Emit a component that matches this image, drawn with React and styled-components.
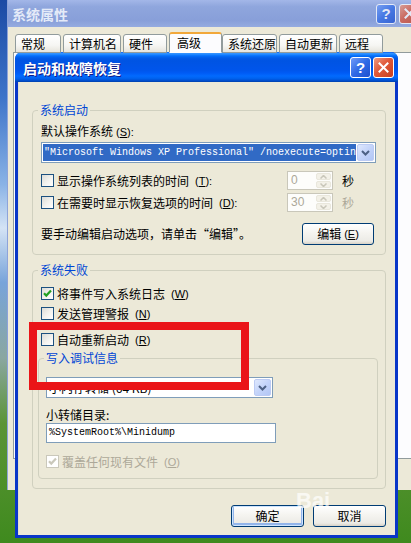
import React from 'react';
import styled, { createGlobalStyle } from 'styled-components';

const GlobalStyle = createGlobalStyle`
  html, body {
    margin: 0;
    padding: 0;
  }
  body {
    font-family: "Noto Sans CJK SC", "Liberation Sans", sans-serif;
    font-size: 12px;
    line-height: 14px;
    color: #000;
  }
`;

const Desktop = styled.div`
  position: relative;
  width: 411px;
  height: 543px;
  overflow: hidden;
  background: linear-gradient(
    to bottom,
    #1c4aa4 0%,
    #3d74c9 18%,
    #8ab3e6 34%,
    #d4e3f5 42%,
    #78a4da 52%,
    #8aa7a0 66%,
    #5b9436 78%,
    #3f8a1e 100%
  );
`;

/* ---------- back window: 系统属性 ---------- */

const BackWindow = styled.div`
  position: absolute;
  left: 7px;
  top: 0;
  width: 430px;
  height: 490px;
  display: flex;
  flex-direction: column;
  background: #ece9d8;
  border-left: 1px solid #8ea3d9;
`;

const BackTitleBar = styled.div`
  height: 27px;
  flex-shrink: 0;
  display: flex;
  align-items: center;
  gap: 3px;
  padding: 0 19px 0 4px;
  background: linear-gradient(to bottom, #a3b7e8 0%, #8fa6dd 25%, #889fd9 75%, #95abe0 100%);
  color: #e4eaf8;
  font-size: 14px;
  font-weight: bold;
`;

const TitleText = styled.span`
  flex: 1;
  white-space: nowrap;
  text-shadow: ${(p) => (p.$active ? '1px 1px 0 #0f1b89' : 'none')};
`;

const TitleButton = styled.div`
  width: ${(p) => p.$size}px;
  height: ${(p) => p.$size}px;
  box-sizing: border-box;
  flex-shrink: 0;
  display: flex;
  align-items: center;
  justify-content: center;
  border: 1px solid #fff;
  border-radius: 3px;
  color: #fff;
  font-family: "Liberation Sans", sans-serif;
  font-size: 15px;
  font-weight: bold;
  opacity: ${(p) => (p.$inactive ? 0.75 : 1)};
  background: ${(p) =>
    p.$kind === 'close'
      ? 'linear-gradient(135deg, #ee9a80 0%, #e0593a 45%, #c8401f 100%)'
      : 'linear-gradient(135deg, #6f9cf8 0%, #2f6ae6 50%, #1d4fcf 100%)'};
`;

const TabStrip = styled.div`
  height: 25px;
  flex-shrink: 0;
  display: flex;
  align-items: flex-end;
  padding-left: 7px;
`;

const Tab = styled.div`
  position: relative;
  z-index: ${(p) => (p.$active ? 2 : 1)};
  width: ${(p) => p.$w}px;
  height: ${(p) => (p.$active ? 21 : 19)}px;
  margin-right: ${(p) => (p.$active ? 0 : 2)}px;
  margin-bottom: -1px;
  box-sizing: border-box;
  flex-shrink: 0;
  display: flex;
  align-items: center;
  padding-left: ${(p) => (p.$active ? 7 : 5)}px;
  border: 1px solid #919b9c;
  border-bottom: ${(p) => (p.$active ? '1px solid #fcfcfe' : '1px solid #919b9c')};
  border-top: ${(p) => (p.$active ? '2px solid #f2a83a' : '1px solid #919b9c')};
  border-radius: 3px 3px 0 0;
  background: ${(p) =>
    p.$active ? '#fcfcfe' : 'linear-gradient(to bottom, #ffffff 0%, #f6f6f3 60%, #e6e4dc 100%)'};
  font-size: 12px;
  white-space: nowrap;
`;

const TabPanel = styled.div`
  height: 407px;
  margin-left: 5px;
  box-sizing: border-box;
  border: 1px solid #919b9c;
  background: #fcfcfe;
`;

/* ---------- front dialog: 启动和故障恢复 ---------- */

const Dialog = styled.div`
  position: absolute;
  left: 15px;
  top: 52px;
  width: 383px;
  height: 486px;
  box-sizing: border-box;
  display: flex;
  flex-direction: column;
  background: #0936c8;
  border-radius: 7px 7px 0 0;
  overflow: hidden;
`;

const TitleBar = styled.div`
  height: 30px;
  flex-shrink: 0;
  display: flex;
  align-items: center;
  gap: 2px;
  padding: 1px 4px 0 8px;
  box-sizing: border-box;
  color: #fff;
  font-size: 14px;
  font-weight: bold;
  background: linear-gradient(
    to bottom,
    #0058ee 0%,
    #3593ff 4%,
    #288eff 7%,
    #127dff 10%,
    #036ffc 13%,
    #0262ee 17%,
    #0057e5 23%,
    #0054e3 30%,
    #0055eb 60%,
    #005bf5 70%,
    #026afe 80%,
    #0062ef 88%,
    #0052d6 94%,
    #0040ab 100%
  );
`;

const Body = styled.div`
  flex: 1;
  margin: 0 3px 3px;
  padding: 21px 9px 0 13px;
  display: flex;
  flex-direction: column;
  background: #ece9d8;
  border-left: 1px solid #e3e0cc;
`;

const Group = styled.fieldset`
  margin: ${(p) => p.$mt || 0}px 0 0;
  padding: ${(p) => p.$pad};
  border: 1px solid #d0d0bf;
  border-radius: 4px;
  min-width: 0;
`;

const Legend = styled.legend`
  color: #0046d5;
  padding: 0 2px;
  margin-left: ${(p) => p.$ml || 0}px;
  line-height: 14px;
  font-size: 12px;
`;

const Key = styled.span`
  margin-left: 3px;
  font-family: "Liberation Sans", sans-serif;
  font-size: 11px;

  u {
    text-underline-offset: 1px;
  }
`;

const Label = styled.div`
  height: 14px;
  margin-top: ${(p) => p.$mt || 0}px;
  color: ${(p) => (p.$disabled ? '#aca899' : '#000')};
  white-space: nowrap;
`;

const Combo = styled.div`
  width: ${(p) => p.$w}px;
  height: 21px;
  margin-top: ${(p) => p.$mt || 0}px;
  box-sizing: border-box;
  flex-shrink: 0;
  display: flex;
  padding: 1px;
  gap: 1px;
  border: 1px solid #7f9db9;
  background: #fff;
`;

const ComboText = styled.div`
  flex: 1;
  min-width: 0;
  overflow: hidden;
  white-space: nowrap;
  padding-left: 1px;
  line-height: 17px;
  font-family: ${(p) => (p.$mono ? '"Liberation Mono", monospace' : 'inherit')};
  font-size: ${(p) => (p.$mono ? 10 : 12)}px;
  background: ${(p) => (p.$selected ? '#316ac5' : 'transparent')};
  color: ${(p) => (p.$selected ? '#fff' : '#000')};
`;

const DropButton = styled.div`
  width: 17px;
  flex-shrink: 0;
  box-sizing: border-box;
  display: flex;
  align-items: center;
  justify-content: center;
  border: 1px solid #bccbf4;
  border-radius: 2px;
  background: linear-gradient(135deg, #dfe8fd 0%, #c4d4fa 50%, #b2c6f5 100%);
`;

const TimeRow = styled.div`
  display: grid;
  grid-template-columns: 1fr 46px 35px;
  column-gap: 9px;
  align-items: center;
  height: 19px;
  margin-top: ${(p) => p.$mt || 0}px;
`;

const CheckRow = styled.label`
  display: flex;
  align-items: center;
  gap: 3px;
  height: 15px;
  margin-top: ${(p) => p.$mt || 0}px;
  padding-left: ${(p) => p.$pl || 0}px;
  color: ${(p) => (p.$disabled ? '#aca899' : '#000')};
  white-space: nowrap;
`;

const CheckBox = styled.span`
  width: 13px;
  height: 13px;
  box-sizing: border-box;
  flex-shrink: 0;
  display: flex;
  align-items: center;
  justify-content: center;
  border: 1px solid ${(p) => (p.$disabled ? '#cac8bb' : '#1c5180')};
  background: ${(p) =>
    p.$disabled ? '#fff' : 'linear-gradient(135deg, #dcdcd7 0%, #f3f3ef 55%, #ffffff 100%)'};
`;

const SpinBox = styled.div`
  width: 46px;
  height: 19px;
  box-sizing: border-box;
  display: flex;
  padding: 1px;
  border: 1px solid #c9c7ba;
  background: #fdfdfb;
`;

const SpinValue = styled.span`
  flex: 1;
  padding-left: 2px;
  line-height: 15px;
  color: #aca899;
  font-family: "Liberation Sans", sans-serif;
  font-size: 12px;
`;

const SpinButtons = styled.div`
  width: 15px;
  display: flex;
  flex-direction: column;
  gap: 1px;
`;

const SpinArrow = styled.div`
  flex: 1;
  display: flex;
  align-items: center;
  justify-content: center;
  border-radius: 2px;
  background: #f3f1e8;
  border: 1px solid #e9e7dc;
`;

const Unit = styled.span`
  color: ${(p) => (p.$disabled ? '#aca899' : '#000')};
`;

const EditRow = styled.div`
  display: flex;
  align-items: center;
  justify-content: space-between;
  margin-top: 11px;
  padding-right: 3px;
`;

const Button = styled.div`
  width: ${(p) => p.$w || 73}px;
  height: 22px;
  box-sizing: border-box;
  display: flex;
  align-items: center;
  justify-content: center;
  border: 1px solid #003c74;
  border-radius: 3px;
  background: linear-gradient(to bottom, #ffffff 0%, #f5f4f0 45%, #ecebe6 85%, #d8d2c6 100%);
  box-shadow: ${(p) => (p.$default ? 'inset 0 0 0 1px #cde4fe, inset 0 -1px 0 2px #93b5ea' : 'none')};
  font-size: 12px;
  white-space: nowrap;
`;

const TextBox = styled.div`
  width: 230px;
  height: 20px;
  margin-top: 1px;
  box-sizing: border-box;
  padding-left: 2px;
  border: 1px solid #7f9db9;
  background: #fff;
  line-height: 18px;
  font-family: "Liberation Mono", monospace;
  font-size: 10px;
`;

const ButtonRow = styled.div`
  display: flex;
  justify-content: flex-end;
  gap: 9px;
  margin-top: 16px;
`;

/* ---------- overlays ---------- */

const Highlight = styled.div`
  position: absolute;
  left: 29px;
  top: 322px;
  width: 220px;
  height: 68px;
  box-sizing: border-box;
  border: 8px solid #ea1418;
`;

const Watermark = styled.div`
  position: absolute;
  left: 296px;
  top: 494px;
  color: rgba(255, 255, 255, 0.7);
  font-family: "Liberation Sans", sans-serif;
  font-weight: bold;
  font-size: 22px;
  pointer-events: none;
`;

const CloseGlyph = () => (
  <svg width="11" height="11" viewBox="0 0 11 11">
    <path d="M1.5 1.5 L9.5 9.5 M9.5 1.5 L1.5 9.5" stroke="#fff" strokeWidth="2" strokeLinecap="square" />
  </svg>
);

const Chevron = () => (
  <svg width="9" height="6" viewBox="0 0 9 6">
    <path d="M1 1 L4.5 4.5 L8 1" fill="none" stroke="#4d6185" strokeWidth="2" />
  </svg>
);

const Check = ({ checked, disabled }) => (
  <CheckBox $disabled={disabled}>
    {checked && (
      <svg width="11" height="11" viewBox="0 0 11 11">
        <path
          d="M2 5.2 L4.3 7.6 L9 2.6"
          fill="none"
          stroke={disabled ? '#cac8bb' : '#21a121'}
          strokeWidth="2.2"
        />
      </svg>
    )}
  </CheckBox>
);

const Spin = ({ value }) => (
  <SpinBox>
    <SpinValue>{value}</SpinValue>
    <SpinButtons>
      <SpinArrow>
        <svg width="7" height="4" viewBox="0 0 7 4">
          <path d="M0.5 3.5 L3.5 0.5 L6.5 3.5" fill="none" stroke="#c9c7ba" strokeWidth="1.5" />
        </svg>
      </SpinArrow>
      <SpinArrow>
        <svg width="7" height="4" viewBox="0 0 7 4">
          <path d="M0.5 0.5 L3.5 3.5 L6.5 0.5" fill="none" stroke="#c9c7ba" strokeWidth="1.5" />
        </svg>
      </SpinArrow>
    </SpinButtons>
  </SpinBox>
);

const Mnemonic = ({ k, colon }) => (
  <Key>
    (<u>{k}</u>){colon ? ':' : ''}
  </Key>
);

const tabs = [
  { label: '常规', w: 46 },
  { label: '计算机名', w: 58 },
  { label: '硬件', w: 44 },
  { label: '高级', w: 53, active: true },
  { label: '系统还原', w: 55 },
  { label: '自动更新', w: 58 },
  { label: '远程', w: 44 },
];

export default function App() {
  return (
    <Desktop>
      <GlobalStyle />

      <BackWindow>
        <BackTitleBar>
          <TitleText>系统属性</TitleText>
          <TitleButton $kind="help" $size={20} $inactive>?</TitleButton>
          <TitleButton $kind="close" $size={20} $inactive>
            <CloseGlyph />
          </TitleButton>
        </BackTitleBar>
        <TabStrip>
          {tabs.map((t) => (
            <Tab key={t.label} $w={t.w} $active={t.active}>
              {t.label}
            </Tab>
          ))}
        </TabStrip>
        <TabPanel />
      </BackWindow>

      <Dialog>
        <TitleBar>
          <TitleText $active>启动和故障恢复</TitleText>
          <TitleButton $kind="help" $size={21}>?</TitleButton>
          <TitleButton $kind="close" $size={21}>
            <CloseGlyph />
          </TitleButton>
        </TitleBar>

        <Body>
          <Group $pad="7px 8px 9px 8px">
            <Legend $ml={-3}>系统启动</Legend>
            <Label>
              默认操作系统<Mnemonic k="S" colon />
            </Label>
            <Combo $w={335} $mt={4}>
              <ComboText $mono $selected>
                "Microsoft Windows XP Professional" /noexecute=optin
              </ComboText>
              <DropButton>
                <Chevron />
              </DropButton>
            </Combo>
            <TimeRow $mt={8}>
              <CheckRow>
                <Check />
                显示操作系统列表的时间<Mnemonic k="T" colon />
              </CheckRow>
              <Spin value="0" />
              <Unit>秒</Unit>
            </TimeRow>
            <TimeRow $mt={3}>
              <CheckRow>
                <Check />
                在需要时显示恢复选项的时间<Mnemonic k="D" colon />
              </CheckRow>
              <Spin value="30" />
              <Unit $disabled>秒</Unit>
            </TimeRow>
            <EditRow>
              <Label>要手动编辑启动选项，请单击“编辑”。</Label>
              <Button $w={72}>
                编辑<Mnemonic k="E" />
              </Button>
            </EditRow>
          </Group>

          <Group $mt={8} $pad="9px 7px 9px 5px">
            <Legend>系统失败</Legend>
            <CheckRow $pl={3}>
              <Check checked />
              将事件写入系统日志<Mnemonic k="W" />
            </CheckRow>
            <CheckRow $pl={3} $mt={5}>
              <Check />
              发送管理警报<Mnemonic k="N" />
            </CheckRow>
            <CheckRow $pl={3} $mt={11}>
              <Check />
              自动重新启动<Mnemonic k="R" />
            </CheckRow>

            <Group $mt={4} $pad="12px 7px 9px 7px">
              <Legend $ml={-2}>写入调试信息</Legend>
              <Combo $w={227}>
                <ComboText>小内存转储 (64 KB)</ComboText>
                <DropButton>
                  <Chevron />
                </DropButton>
              </Combo>
              <Label $mt={10}>小转储目录:</Label>
              <TextBox>%SystemRoot%\Minidump</TextBox>
              <CheckRow $mt={11} $disabled>
                <Check checked disabled />
                覆盖任何现有文件<Mnemonic k="O" />
              </CheckRow>
            </Group>
          </Group>

          <ButtonRow>
            <Button $default>确定</Button>
            <Button>取消</Button>
          </ButtonRow>
        </Body>
      </Dialog>

      <Highlight />
      <Watermark>Bai</Watermark>
    </Desktop>
  );
}
